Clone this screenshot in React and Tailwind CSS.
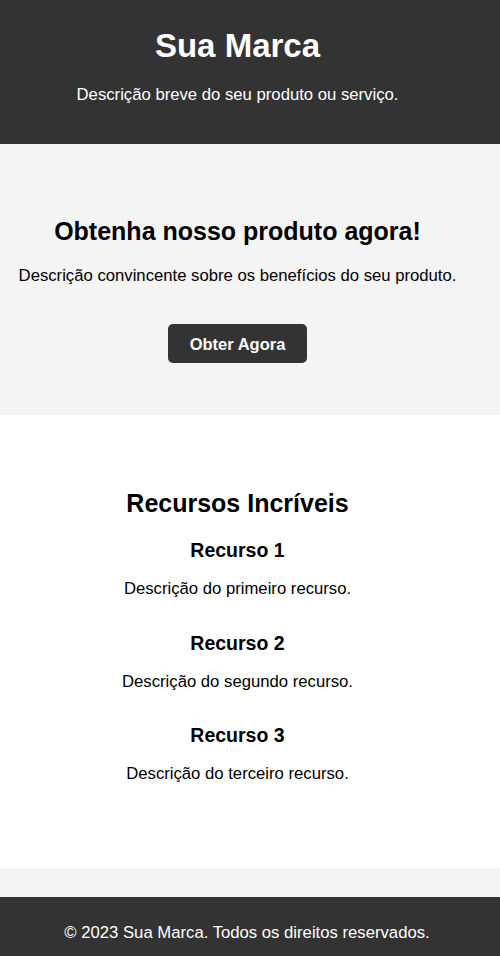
import React from 'react'

const features = [
  { title: 'Recurso 1', text: 'Descrição do primeiro recurso.' },
  { title: 'Recurso 2', text: 'Descrição do segundo recurso.' },
  { title: 'Recurso 3', text: 'Descrição do terceiro recurso.' }
]

const App = () => {
  return (
    <div className="font-['Liberation_Sans',Arial,sans-serif] text-black bg-white">
      {/* Header */}
      <header className="bg-[#333333] text-white text-center pt-[27px] pb-[40px] pr-[25px]">
        <h1 className="text-[33px] leading-[37px] font-bold">Sua Marca</h1>
        <p className="mt-[22px] text-[16.7px] leading-[18px]">Descrição breve do seu produto ou serviço.</p>
      </header>

      {/* Hero */}
      <section className="bg-[#f4f4f4] text-center pt-[73px] pb-[52px] pr-[25px] flex flex-col items-center">
        <h2 className="text-[25px] leading-[28px] font-bold">Obtenha nosso produto agora!</h2>
        <p className="mt-[22px] text-[16.7px] leading-[18px]">Descrição convincente sobre os benefícios do seu produto.</p>
        <button className="mt-[39px] w-[139px] h-[39px] rounded-[5px] bg-[#333333] text-white font-bold text-[16.5px] leading-[18px] flex items-center justify-center">
          Obter Agora
        </button>
      </section>

      {/* Features */}
      <section className="bg-white text-center pt-[74px] pb-[85px] pr-[25px]">
        <h2 className="text-[25px] leading-[28px] font-bold">Recursos Incríveis</h2>
        <div className="mt-[22px] flex flex-col gap-[33.5px]">
          {features.map((f) => (
            <div key={f.title}>
              <h3 className="text-[19.5px] leading-[22px] font-bold">{f.title}</h3>
              <p className="mt-[19px] text-[16.7px] leading-[18px]">{f.text}</p>
            </div>
          ))}
        </div>
      </section>

      <div className="h-[29px] bg-[#f4f4f4]"></div>

      {/* Footer */}
      <footer className="bg-[#333333] text-white text-center pt-[27px] pb-[27px] pr-[6px]">
        <p className="text-[16.7px] leading-[18px]">© 2023 Sua Marca. Todos os direitos reservados.</p>
      </footer>
    </div>
  )
}

export default App
